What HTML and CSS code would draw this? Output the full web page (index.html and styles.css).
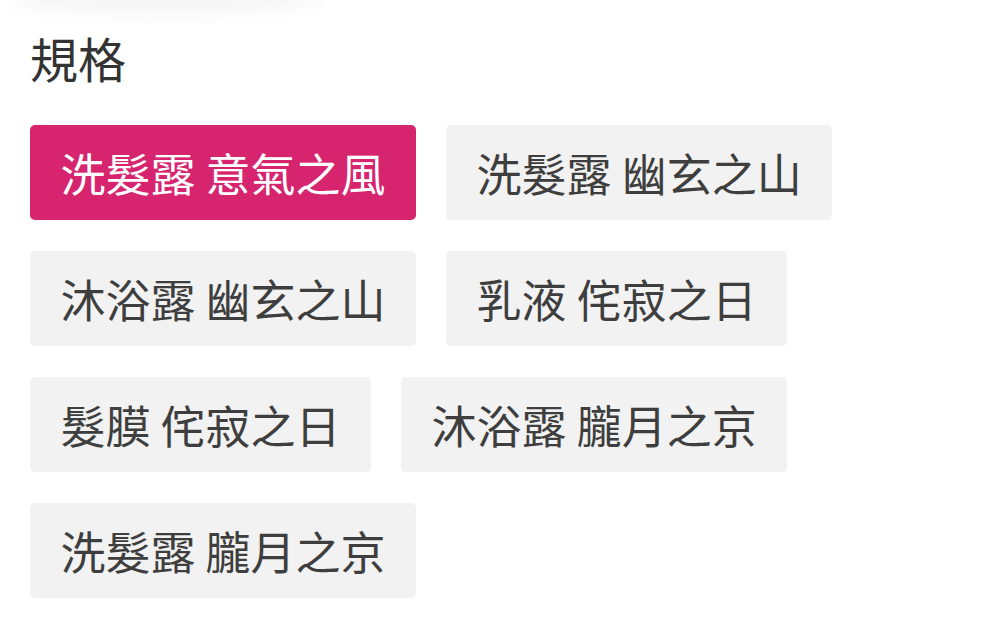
FILE: index.html
```html
<!DOCTYPE html>
<html lang="zh-Hant">
<head>
    <meta charset="UTF-8">
    <meta name="viewport" content="width=device-width, initial-scale=1.0">
    <title>規格</title>
    <link rel="stylesheet" href="styles.css">
</head>
<body>
    <div class="top-shade"></div>
    <div class="spec">
        <h2 class="spec-title">規格</h2>
        <div class="options">
            <button class="option selected">洗髮露 意氣之風</button>
            <button class="option">洗髮露 幽玄之山</button>
            <button class="option">沐浴露 幽玄之山</button>
            <button class="option">乳液 侘寂之日</button>
            <button class="option">髮膜 侘寂之日</button>
            <button class="option">沐浴露 朧月之京</button>
            <button class="option">洗髮露 朧月之京</button>
        </div>
    </div>
</body>
</html>
```

FILE: styles.css
```css
body { margin: 0; background-color: #ffffff; font-family: "Noto Sans CJK TC", "Noto Sans", sans-serif; color: #333333; position: relative; overflow: hidden; }
.top-shade { position: absolute; left: 10px; top: -20px; width: 310px; height: 34px; border-radius: 50%; background-color: #f5f5f5; filter: blur(9px); }
.spec { position: relative; padding: 22px 30px 0 30px; }
.spec-title { margin: 0 0 33px 0; font-size: 48px; font-weight: normal; line-height: 70px; color: #333333; }
.options { display: flex; flex-wrap: wrap; gap: 31px 30px; }
.option { display: inline-flex; align-items: center; height: 95px; padding: 0 30.5px; border: none; border-radius: 5px; background-color: #f2f2f2; color: #3e3e3e; font-family: inherit; font-size: 45px; white-space: nowrap; cursor: pointer; }
.option.selected { background-color: #d6246e; color: #ffffff; }
```
